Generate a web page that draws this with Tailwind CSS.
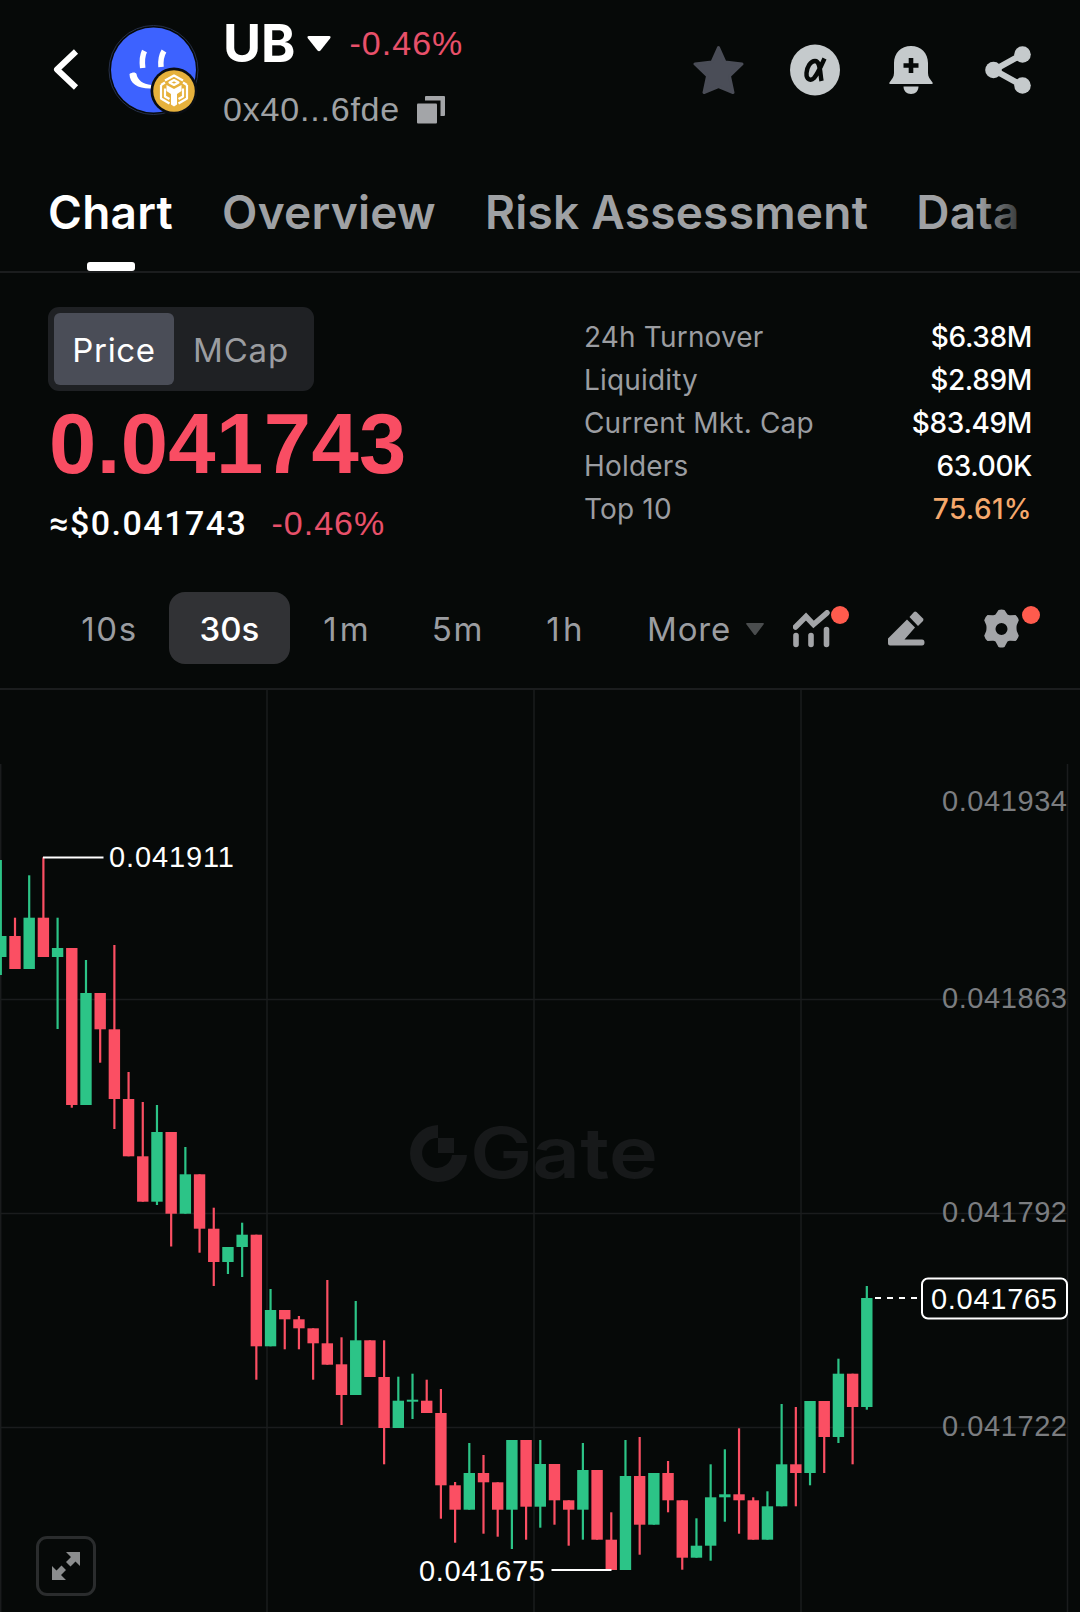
<!DOCTYPE html>
<html lang="en">
<head>
    <meta charset="UTF-8">
    <meta name="viewport" content="width=device-width, initial-scale=1.0">
    <title>UB Chart</title>
    <script src="https://cdn.jsdelivr.net/npm/@tailwindcss/browser@4"></script>
</head>
<body class="w-[1080px] h-[1612px] overflow-hidden bg-[#060908] text-white font-['Inter',sans-serif]">

    <!-- Header -->
    <header class="h-[140px] flex items-center pl-[52px] pr-[49px]">
        <svg class="w-[28px] h-[42px] shrink-0" viewBox="0 0 28 42" fill="none" stroke="#fff" stroke-width="6" stroke-linejoin="round">
            <path d="M24 2.500 5 20.500l19 18"/>
        </svg>
        <svg class="w-[92px] h-[92px] ml-[28px] shrink-0" viewBox="0 0 92 92">
            <circle cx="45.500" cy="46" r="44.500" fill="#060908" stroke="#26304a" stroke-width="1"/>
            <circle cx="45.500" cy="46" r="42.500" fill="#3d62ff"/>
            <path d="M36.500 27c-2 4-2.500 11-1.800 17M56 27c-2.500 4-3.500 10-3 16" fill="none" stroke="#fff" stroke-width="5.500"/>
            <path d="M21.500 50c3-2 6-2 7 0 1 6 6 10 15 11v3.500c-13 .5-22-4.500-22-14.500z" fill="#fff"/>
            <circle cx="66" cy="67" r="23.500" fill="#0a0d12"/>
            <circle cx="66" cy="67" r="20.800" fill="#e6b13c"/>
            <g fill="none" stroke="#fff" stroke-width="2.200" stroke-linejoin="round">
                <path d="M57 56.500 66 51.500l9 5M53 61v13.500l8.500 5M79 61v13.500l-8.500 5"/>
                <path d="M53 61l4-2.500M79 61l-4-2.500M66 56l4.500 2.500L66 61l-4.500-2.500zM57 64.500v8l4.500 2.500M75 64.500v8L70.500 75"/>
            </g>
            <path d="M58.500 61 66 65l7.500-4v6L69 70v10.500l-3 2-3-2V70l-4.500-3z" fill="#fff"/>
        </svg>
        <div class="ml-[23px] flex flex-col h-[140px]">
            <div class="flex items-center h-[87px]">
                <span class="text-[52px] font-bold">UB</span>
                <svg class="w-[24px] h-[16px] ml-[12px]" viewBox="0 0 24 16"><path d="M2 0h20q2.500 0 1 2.500L13.500 14.500q-1.500 1.500-3 0L1 2.500Q-.5 0 2 0z" fill="#fff"/></svg>
                <span class="ml-[18px] text-[34px] text-[#e8506a] font-['Liberation_Sans',sans-serif] tracking-[0.03em]">-0.46%</span>
            </div>
            <div class="flex items-center h-[45px]">
                <span class="text-[34px] text-[#9fa1a4] font-['Liberation_Sans',sans-serif] tracking-[0.8px]">0x40...6fde</span>
                <svg class="w-[28px] h-[28px] ml-[17px]" viewBox="0 0 28 28" fill="#a3a5a8"><rect x="0" y="7.500" width="20" height="20" rx="1"/><path d="M8 1q0-1 1-1h18q1 0 1 1v18q0 1-1 1h-3.500V4.500H8z"/></svg>
            </div>
        </div>
        <div class="ml-auto flex items-center">
            <svg class="w-[51px] h-[50px]" viewBox="0 0 51 50"><path d="M25.500 2.500l6.500 14.500 17 2-12.500 12 3.500 16.500-14.500-6-14.500 6L14.500 31 2 19l17-2z" fill="#4a4d57" stroke="#4a4d57" stroke-width="3" stroke-linejoin="round"/></svg>
            <svg class="w-[50px] h-[52px] ml-[46px]" viewBox="0 0 50 52">
                <ellipse cx="25" cy="26" rx="25" ry="25.500" fill="#c5cacc"/>
                <path d="M34.500 14.500c-3 6.500-6.500 15-10.500 19.500-3 3.200-8 2-7.500-5 .4-6 4-12 8.500-12 5.500 0 5 12 6.500 20" fill="none" stroke="#060908" stroke-width="4.400"/>
            </svg>
            <svg class="w-[44px] h-[50px] ml-[49px]" viewBox="0 0 44 50">
                <path d="M22 1c10 0 17 7 17 17v10c0 4 2 6 4.500 9.500q1 1.500-1 1.500h-41q-2 0-1-1.500C3 34 5 32 5 28V18C5 8 12 1 22 1z" fill="#c5cacc"/>
                <path d="M14.500 41.500h15c0 4.500-3 7.500-7.500 7.500s-7.500-3-7.500-7.500z" fill="#c5cacc"/>
                <path d="M22 13v15M14.500 20.500h15" stroke="#060908" stroke-width="4.600"/>
            </svg>
            <svg class="w-[46px] h-[50px] ml-[52px]" viewBox="0 0 46 50" fill="#c5cacc">
                <path d="M38 9 9 25l29 16" fill="none" stroke="#c5cacc" stroke-width="6"/>
                <circle cx="37.500" cy="9.500" r="8.300"/><circle cx="8.500" cy="25" r="8.300"/><circle cx="37.500" cy="40.500" r="8.300"/>
            </svg>
        </div>
    </header>

    <!-- Tabs -->
    <nav class="relative h-[133px] border-b-2 border-[#1b1d1e]">
        <div class="w-[1021px] overflow-hidden flex pl-[48px] pt-[40px] h-full text-[46px] leading-[64px] font-semibold text-[#9fa1a4] whitespace-nowrap tracking-[0.25px]">
            <div class="relative mr-[49px] h-[91px] text-white">Chart
                <span class="absolute bottom-0 left-1/2 -translate-x-1/2 w-[48px] h-[9px] rounded-[3px] bg-white"></span>
            </div>
            <div class="mr-[49px]">Overview</div>
            <div class="mr-[48px]">Risk Assessment</div>
            <div>Data</div>
        </div>
        <div class="absolute top-0 left-[978px] w-[60px] h-[120px] bg-linear-to-r from-[#060908]/0 to-[#060908]"></div>
    </nav>

    <!-- Price and stats -->
    <section class="h-[295px] flex justify-between pl-[48px] pr-[48px]">
        <div class="pt-[34px]">
            <div class="flex w-[266px] h-[84px] p-[6px] rounded-[11px] bg-[#1f2124] text-[33px]">
                <div class="w-[120px] h-[72px] pt-[3px] rounded-[6px] bg-[#4a4d57] flex items-center justify-center tracking-[0.02em]">Price</div>
                <div class="w-[134px] h-[72px] pt-[3px] flex items-center justify-center text-[#9b9da1] tracking-[0.025em]">MCap</div>
            </div>
            <div class="mt-[13px] pl-px h-[80px] leading-[80px] text-[85px] font-bold text-[#f94d63] font-['Liberation_Sans',sans-serif] tracking-[0.4px]">0.041743</div>
            <div class="mt-[19px] pl-px h-[40px] leading-[40px] text-[34px] flex">
                <span class="font-medium font-['Roboto',sans-serif] tracking-[1.5px]">≈$0.041743</span>
                <span class="ml-[24px] text-[#e8506a] font-['Liberation_Sans',sans-serif] tracking-[0.03em]">-0.46%</span>
            </div>
        </div>
        <div class="pt-[42px] w-[448px] text-[28px]" id="stats"></div>
    </section>

    <!-- Intervals and tools -->
    <div class="h-[122px] border-b-2 border-[#1b1d1e] flex items-center pl-[50px] text-[33px] text-[#9b9da1]">
        <div class="w-[119px] pt-[3px] text-center tracking-[0.05em]">10s</div>
        <div class="w-[121px] h-[72px] pt-[3px] rounded-[16px] bg-[#313235] text-white font-medium flex items-center justify-center">30s</div>
        <div class="w-[115px] pt-[3px] text-center tracking-[0.09em]">1m</div>
        <div class="w-[106px] pt-[3px] text-center tracking-[0.05em]">5m</div>
        <div class="w-[110px] pt-[3px] text-center tracking-[0.1em]">1h</div>
        <div class="w-[172px] pt-[3px] pl-[26px] flex items-center tracking-[0.025em]">More
            <svg class="w-[18px] h-[13px] ml-[15px]" viewBox="0 0 18 13"><path d="M1 0h16q1.500 0 .5 1.500L10 11.500q-1 1-2 0L.5 1.500Q-.5 0 1 0z" fill="#4a4d4e"/></svg>
        </div>
        <div class="relative w-[37px] h-[38px] mt-[2px]">
            <svg class="w-[37px] h-[38px]" viewBox="0 0 37 38" fill="none" stroke="#a3a5a8">
                <path d="M2.500 17 13 6.500l7.500 8L34 2.800" stroke-width="5.500" stroke-linecap="round" stroke-linejoin="miter"/>
                <path d="M3 25.500v9M18 25.500v9M33.500 19.500v15" stroke-width="5.600" stroke-linecap="round"/>
            </svg>
            <span class="absolute -top-[4px] left-[38px] w-[18px] h-[18px] rounded-full bg-[#ff5b4d]"></span>
        </div>
        <svg class="w-[37px] h-[37px] ml-[58px] mt-px" viewBox="0 0 37 37" fill="#a3a5a8">
            <path d="M19 9.500 27 17.500 16.500 29.500H34q2.500 0 2.500 3t-2.500 3H2q-2 0-2-2V28.500z"/>
            <path d="M21.500 7 26 2q1-1 2.500 0L35 8.500q1 1 0 2.500l-5 5z"/>
        </svg>
        <div class="relative w-[37px] h-[40px] ml-[58px] mt-[2px]">
            <svg class="w-[37px] h-[40px]" viewBox="0 0 37 40">
                <path fill="#a3a5a8" fill-rule="evenodd" d="M15.500 1q3-1.200 6 0l3 4.500q1 1 3 .8l5-.3q2.500 2 3.300 5.200l-2 4.800q-.6 2.500 0 6l2 4.800q-.8 3.200-3.300 5.200l-5-.3q-2-.2-3 .8l-3 5.500q-3 1.200-6 0l-3-5.500q-1-1-3-.8l-5 .3q-2.500-2-3.300-5.200l2-4.800q.6-3.500 0-6l-2-4.800Q2 8 4.500 6l5 .3q2 .2 3-.8zM18.500 14a6 6 0 1 0 0 12 6 6 0 1 0 0-12z"/>
            </svg>
            <span class="absolute -top-[3px] left-[39px] w-[18px] h-[18px] rounded-full bg-[#ff5b4d]"></span>
        </div>
    </div>

    <!-- Candles -->
    <main class="relative h-[922px]">
        <svg id="chart" class="block w-[1080px] h-[922px]" viewBox="0 690 1080 922">
            <g stroke="#1a1c1d" stroke-width="1.500">
                <path d="M267 690v922M534 690v922M801 690v922M.7 764v848M1067.500 764v848"/>
                <path d="M0 999.500h1067M0 1213.500h1067M0 1427.500h1067"/>
            </g>
            <g fill="#17191a">
                <path d="M438 1125v13a15 15 0 1 0 14 17h15a28.500 28.500 0 1 1-29-30zM438 1138h16v15h-16z"/>
                <text x="470" y="1178" font-size="70" font-weight="600" textLength="188" lengthAdjust="spacingAndGlyphs">Gate</text>
            </g>
            <g id="candles"></g>
            <path d="M43 857.500h60.500M551.500 1570h60" stroke="#fff" stroke-width="2"/>
            <path d="M875 1298h44" stroke="#fff" stroke-width="2" stroke-dasharray="6 6"/>
            <rect x="922" y="1278.500" width="145" height="40" rx="6" fill="#060908" stroke="#fff" stroke-width="2"/>
            <g font-family="'Liberation Sans', sans-serif" font-size="29">
                <g fill="#fff">
                    <text x="109" y="867" textLength="125">0.041911</text>
                    <text x="419" y="1581" textLength="126">0.041675</text>
                    <text x="931" y="1309" textLength="126">0.041765</text>
                </g>
                <g fill="#7b7d80">
                    <text x="942" y="811" textLength="125">0.041934</text>
                    <text x="942" y="1008" textLength="125">0.041863</text>
                    <text x="942" y="1222" textLength="125">0.041792</text>
                    <text x="942" y="1436" textLength="125">0.041722</text>
                </g>
            </g>
        </svg>
        <button class="absolute left-[36px] bottom-[16px] w-[60px] h-[60px] rounded-[11px] border-[3px] border-[#2a2c2d] flex items-center justify-center">
            <svg class="w-[28px] h-[28px]" viewBox="0 0 28 28" fill="#8b8d8e">
                <path d="M14 0h14v14l-4.500-4.500-5 5-4.500-4.500 5-5zM14 28H0V14l4.500 4.500 5-5L14 18l-5 5z"/>
            </svg>
        </button>
    </main>

    <script>
        const stats = [
            ["24h Turnover", "$6.38M"],
            ["Liquidity", "$2.89M"],
            ["Current Mkt. Cap", "$83.49M"],
            ["Holders", "63.00K"],
            ["Top 10", "75.61%"]
        ];
        document.getElementById("stats").innerHTML = stats.map(([label, value]) => `
            <div class="flex justify-between items-center h-[43px]">
                <span class="text-[#9b9da1] tracking-[0.006em]">${label}</span>
                <span class="font-medium ${value.endsWith("%") ? "text-[#f5a86c] tracking-[0.012em]" : "text-white tracking-[-0.013em]"}">${value}</span>
            </div>`).join("");

        // [direction, high, body top, body bottom, low] as y positions
        const candles = [
            ["u", 860, 936, 957, 975], ["d", 917.7, 936, 969, 969], ["u", 875.3, 917.7, 969, 969],
            ["d", 857.3, 917.7, 957, 957], ["u", 917.7, 948, 957, 1029], ["d", 948, 948, 1105, 1107.7],
            ["u", 960, 993, 1105, 1105], ["d", 993, 993, 1029.3, 1062.7], ["d", 945, 1029.3, 1099, 1129],
            ["d", 1072, 1099, 1156.3, 1156.3], ["d", 1102, 1156.3, 1201.7, 1201.7], ["u", 1105, 1132, 1201.7, 1205],
            ["d", 1132, 1132, 1213.7, 1246.5], ["u", 1147, 1174.3, 1213.7, 1213.7], ["d", 1174.3, 1174.3, 1228.7, 1252.7],
            ["d", 1207.7, 1228.7, 1262, 1286], ["u", 1247, 1247, 1262, 1274], ["u", 1222.7, 1234.7, 1247, 1277],
            ["d", 1234.7, 1234.7, 1346.3, 1379.7], ["u", 1289, 1310, 1346.3, 1346.3], ["d", 1310, 1310, 1319.3, 1349.3],
            ["d", 1316, 1319.3, 1328.3, 1349.3], ["d", 1328.3, 1328.3, 1343.3, 1379.7], ["d", 1280, 1343.3, 1364.7, 1364.7],
            ["d", 1337.3, 1364.3, 1395, 1425], ["u", 1301, 1340.3, 1395, 1395], ["d", 1340.3, 1340.3, 1377, 1377],
            ["d", 1340.3, 1377, 1428, 1464.3], ["u", 1376.7, 1400.7, 1428, 1428], ["u", 1373.7, 1399.7, 1401.7, 1419],
            ["d", 1379.7, 1400.7, 1413, 1413], ["d", 1389, 1413, 1485.3, 1518.7], ["d", 1482, 1485.3, 1509.7, 1542.7],
            ["u", 1443, 1473, 1509.7, 1509.7], ["d", 1455, 1473, 1482.3, 1533.7], ["d", 1482.3, 1482.3, 1509.7, 1536.7],
            ["u", 1440, 1440, 1509.7, 1549], ["d", 1440, 1440, 1506.7, 1539.7], ["u", 1440, 1464, 1506.7, 1527.7],
            ["d", 1464, 1464, 1500.3, 1524.7], ["d", 1500.3, 1500.3, 1509.7, 1545.7], ["u", 1443, 1470, 1509.7, 1539.7],
            ["d", 1470, 1470, 1539.7, 1539.7], ["d", 1512.3, 1539.7, 1570, 1570], ["u", 1440, 1476, 1570, 1570],
            ["d", 1437, 1476, 1524.7, 1554.7], ["u", 1473, 1473, 1524.7, 1524.7], ["d", 1461, 1473, 1500.3, 1512.3],
            ["d", 1500.3, 1500.3, 1557.7, 1569.7], ["u", 1518.3, 1545.7, 1557.7, 1557.7], ["u", 1464.3, 1497.3, 1545.7, 1560.7],
            ["u", 1449.3, 1494.3, 1497.3, 1521.7], ["d", 1428.3, 1494.3, 1500.3, 1533.7], ["d", 1497.3, 1500.3, 1539.7, 1539.7],
            ["u", 1491.3, 1506.3, 1539.7, 1539.7], ["u", 1404, 1464.3, 1506.3, 1506.3], ["d", 1407, 1464.3, 1473, 1506.3],
            ["u", 1401, 1401, 1473, 1485.3], ["d", 1401, 1401, 1437, 1473], ["u", 1358.7, 1373.7, 1437, 1443],
            ["d", 1373.7, 1373.7, 1407, 1464.3], ["u", 1286, 1298, 1407, 1409.7]
        ];
        document.getElementById("candles").innerHTML = candles.map(([dir, high, top, bottom, low], i) => {
            const x = 0.8 + i * 14.197;
            const color = dir === "u" ? "#2cc487" : "#fb4f63";
            return `<rect x="${x - 1.1}" y="${high}" width="2.2" height="${low - high}" fill="${color}"/>
                <rect x="${x - 5.7}" y="${top}" width="11.4" height="${bottom - top}" fill="${color}"/>`;
        }).join("");
    </script>

</body>
</html>
